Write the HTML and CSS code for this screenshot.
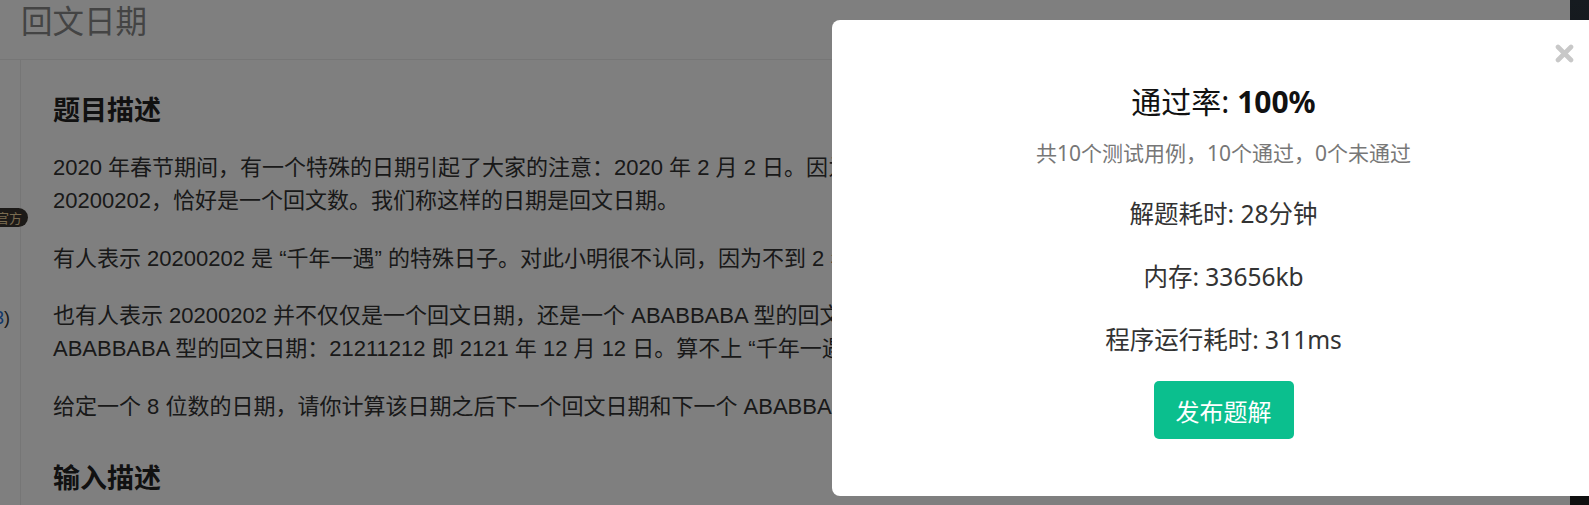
FILE: index.html
```html
<!DOCTYPE html>
<html lang="zh-CN">
<head>
<meta charset="utf-8">
<title>回文日期</title>
<link rel="stylesheet" href="styles.css">
</head>
<body>
<div class="page">
  <header class="title-bar"><h1 class="page-title">回文日期</h1></header>
  <div class="main">
    <aside class="sidebar">
      <span class="badge">官方</span>
      <span class="count"><span class="count-num">3</span>)</span>
    </aside>
    <article class="content">
      <h2 class="section-title">题目描述</h2>
      <p class="para">2020 年春节期间，有一个特殊的日期引起了大家的注意：2020 年 2 月 2 日。因为如果将这个日期按 “yyyymmdd” 的格式写成一个 8 位数是<br>20200202，恰好是一个回文数。我们称这样的日期是回文日期。</p>
      <p class="para">有人表示 20200202 是 “千年一遇” 的特殊日子。对此小明很不认同，因为不到 2 年之后就是下一个回文日期：20211202 即 2021 年 12 月 2 日。</p>
      <p class="para">也有人表示 20200202 并不仅仅是一个回文日期，还是一个 ABABBABA 型的回文日期。对此小明也不认同，因为大约 100 年后就能遇到下一个<br>ABABBABA 型的回文日期：21211212 即 2121 年 12 月 12 日。算不上 “千年一遇”，顶多算 “千年两遇”。</p>
      <p class="para">给定一个 8 位数的日期，请你计算该日期之后下一个回文日期和下一个 ABABBABA 型的回文日期各是哪一天。</p>
      <h2 class="section-title">输入描述</h2>
    </article>
  </div>
  <div class="side-tools"></div>
</div>
<div class="overlay"></div>
<div class="modal">
  <button class="close" aria-label="关闭">
    <svg width="19" height="19" viewBox="0 0 19 19"><path d="M3 3 L16 16 M16 3 L3 16" stroke="#c8c8c8" stroke-width="4.6" stroke-linecap="round"/></svg>
  </button>
  <div class="result">
    <div class="rate">通过率: <b>100%</b></div>
    <div class="summary">共10个测试用例，10个通过，0个未通过</div>
    <div class="stat">解题耗时: 28分钟</div>
    <div class="stat">内存: 33656kb</div>
    <div class="stat">程序运行耗时: 311ms</div>
    <button class="publish">发布题解</button>
  </div>
</div>
</body>
</html>
```
FILE: styles.css
```css
html, body {
  margin: 0;
  padding: 0;
}
body {
  width: 1589px;
  height: 505px;
  overflow: hidden;
  position: relative;
  background: #fff;
  font-family: "Liberation Sans", "Noto Sans CJK SC", sans-serif;
  color: #333;
}
.page {
  height: 505px;
  position: relative;
}
.title-bar {
  height: 59px;
  border-bottom: 1px solid #ececec;
  display: flex;
  align-items: flex-start;
}
.page-title {
  margin: 1px 0 0 21px;
  font-family: "Noto Sans CJK SC", sans-serif;
  font-size: 31.5px;
  font-weight: 400;
  line-height: 36px;
  color: #888;
}
.main {
  display: flex;
}
.sidebar {
  width: 20px;
  flex: none;
  border-right: 1px solid #ececec;
  height: 445px;
  display: flex;
  flex-direction: column;
  align-items: flex-start;
}
.badge {
  margin: 148px 0 0 -10px;
  height: 19px;
  line-height: 19px;
  padding: 0 6px;
  border-radius: 10px;
  background: #383430;
  color: #f0d6a0;
  font-family: "Noto Sans CJK SC", sans-serif;
  font-size: 13px;
  white-space: nowrap;
}
.count {
  margin: 81px 0 0 -6px;
  font-size: 18px;
  line-height: 20px;
  color: #333;
}
.count-num { color: #1f6fd6; }
.content {
  padding: 33px 0 0 32px;
  white-space: nowrap;
}
.section-title {
  margin: 38px 0 26px;
  font-family: "Noto Sans CJK SC", sans-serif;
  font-size: 27px;
  font-weight: 700;
  line-height: 32px;
  color: #222;
}
.section-title:first-child { margin-top: 0; }
.para {
  margin: 0 0 24.5px;
  font-size: 22px;
  line-height: 33px;
  color: #333;
}
.side-tools {
  position: absolute;
  right: 0;
  top: 0;
  width: 19px;
  height: 505px;
  background: linear-gradient(#2c3640, #1e1e1e);
}
.overlay {
  position: absolute;
  inset: 0;
  background: rgba(0, 0, 0, 0.5);
}
.modal {
  position: absolute;
  left: 832px;
  top: 20px;
  width: 783px;
  height: 476px;
  background: #fff;
  border-radius: 8px;
  font-family: "Noto Sans", "Noto Sans CJK SC", sans-serif;
}
.close {
  position: absolute;
  left: 723px;
  top: 24px;
  width: 19px;
  height: 19px;
  padding: 0;
  border: 0;
  background: none;
  display: flex;
}
.result {
  padding-top: 62px;
  display: flex;
  flex-direction: column;
  align-items: center;
}
.rate {
  font-size: 30px;
  line-height: 40px;
  color: #111;
}
.rate b { font-weight: 700; }
.summary {
  margin-top: 16px;
  font-size: 21px;
  line-height: 30px;
  color: #777;
}
.stat {
  margin-top: 29px;
  font-size: 24.5px;
  line-height: 34px;
  color: #333;
}
.publish {
  margin-top: 24px;
  width: 140px;
  height: 58px;
  border: 0;
  border-radius: 5px;
  background: #0bbf8e;
  color: #fff;
  font-family: "Noto Sans CJK SC", sans-serif;
  font-size: 24px;
}
```
